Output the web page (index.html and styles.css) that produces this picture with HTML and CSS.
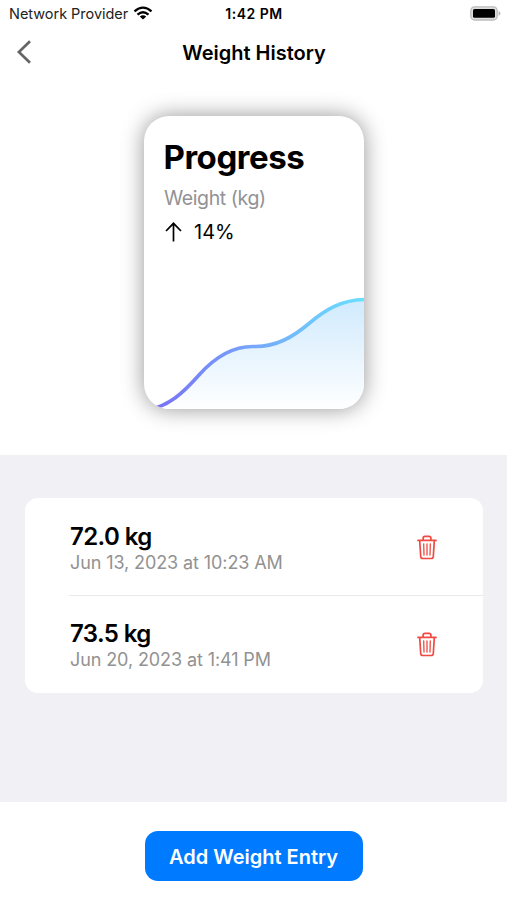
FILE: index.html
```html
<!DOCTYPE html>
<html lang="en">
<head>
<meta charset="utf-8">
<title>Weight History</title>
<link rel="stylesheet" href="styles.css">
</head>
<body>
<header class="status">
  <div class="carrier"><span class="carrier-name">Network Provider</span>
    <svg class="wifi" width="20" height="14" viewBox="0 0 20 14"><g fill="none" stroke="#000" stroke-width="2.3"><path d="M1.5 5.3Q10-2.1 18.5 5.3"/><path d="M4.5 8.6Q10 3.9 15.5 8.6"/></g><path d="M6.8 10.4Q10 7.9 13.2 10.4L10 13.6Z"/></svg>
  </div>
  <span class="time">1:42 PM</span>
  <svg class="battery" width="31" height="15" viewBox="0 0 31 15"><rect x=".8" y=".8" width="26.4" height="13.2" rx="3.8" fill="#ddd" stroke="#bdbdbd" stroke-width="1.3"/><rect x="3" y="3" width="22" height="8.8" rx="1.6"/><path d="M28.6 5Q30.4 5.6 30.4 7.4T28.6 9.8Z" fill="#b5b5b5"/></svg>
</header>
<nav class="nav">
  <svg class="back" width="16" height="26" viewBox="0 0 16 26"><path d="M14 2.2 2.9 13 14 23.8" fill="none" stroke="#656565" stroke-width="2.7"/></svg>
  <h1 class="title">Weight History</h1>
</nav>
<section class="summary">
  <article class="card">
    <h2 class="card-title">Progress</h2>
    <p class="metric">Weight (kg)</p>
    <p class="change"><svg width="18" height="20" viewBox="0 0 18 20"><path d="M9.500 19.500V1.500M2 9 9.500 1.300 17 9" fill="none" stroke="#000" stroke-width="1.700"/></svg><span>14%</span></p>
    <svg class="chart" width="220" height="120" viewBox="0 0 220 120">
      <defs>
        <linearGradient id="line" gradientUnits="userSpaceOnUse" x1="10" y1="0" x2="220" y2="0"><stop stop-color="#7870f5"/><stop offset=".5" stop-color="#76aafa"/><stop offset="1" stop-color="#69e0ff"/></linearGradient>
        <linearGradient id="area" x1="0" y1="0" x2="0" y2="1"><stop stop-color="#d0eafd"/><stop offset="1" stop-color="#fff"/></linearGradient>
      </defs>
      <path d="M4 121C25 117 39 104 55 86S88 57 110 57.500S149 48 165 34.500S198 10.500 221 10.500V120Z" fill="url(#area)"/>
      <path d="M4 121C25 117 39 104 55 86S88 57 110 57.500S149 48 165 34.500S198 10.500 221 10.500" fill="none" stroke="url(#line)" stroke-width="3.600"/>
    </svg>
  </article>
</section>
<main class="history">
  <ul class="entries">
    <li class="entry"><div class="info"><strong class="value">72.0 kg</strong><span class="date">Jun 13, 2023 at 10:23 AM</span></div>
      <svg class="trash" width="20" height="25" viewBox="0 0 20 25"><g fill="none" stroke="#f04a43" stroke-linecap="round" stroke-linejoin="round"><path stroke-width="1.700" d="M1 5.400H19M2.700 5.800 3.700 21.400Q3.900 23.500 5.800 23.500H14.200Q16.100 23.500 16.300 21.400L17.300 5.800M6.100 5V3.200Q6.100 1.300 8 1.300H12Q13.900 1.300 13.900 3.200V5"/><path stroke-width="1.300" d="M6.700 8.800 7 20M10 8.800V20M13.300 8.800 13 20"/></g></svg></li>
    <li class="entry"><div class="info"><strong class="value">73.5 kg</strong><span class="date">Jun 20, 2023 at 1:41 PM</span></div>
      <svg class="trash" width="20" height="25" viewBox="0 0 20 25"><g fill="none" stroke="#f04a43" stroke-linecap="round" stroke-linejoin="round"><path stroke-width="1.700" d="M1 5.400H19M2.700 5.800 3.700 21.400Q3.900 23.500 5.800 23.500H14.200Q16.100 23.500 16.300 21.400L17.300 5.800M6.100 5V3.200Q6.100 1.300 8 1.300H12Q13.900 1.300 13.900 3.200V5"/><path stroke-width="1.300" d="M6.700 8.800 7 20M10 8.800V20M13.300 8.800 13 20"/></g></svg></li>
  </ul>
</main>
<footer class="actions"><button class="add">Add Weight Entry</button></footer>
</body>
</html>
```
FILE: styles.css
```css
* { box-sizing: border-box; margin: 0; padding: 0; }
body { width: 507px; height: 900px; overflow: hidden; display: flex; flex-direction: column; background: #fff; color: #000; font-family: Inter, "Liberation Sans", sans-serif; }
svg { display: block; flex: none; }
.status { height: 27px; display: grid; grid-template-columns: 1fr auto 1fr; align-items: center; padding: 0 6px 0 9px; font-size: 14.5px; }
.carrier { display: flex; align-items: center; gap: 5px; color: #222; white-space: nowrap; }
.carrier-name { letter-spacing: -.03px; }
.wifi { margin-top: -2px; }
.time { font-weight: 600; font-size: 14px; letter-spacing: .5px; margin-right: 2px; }
.battery { justify-self: end; margin-top: -1px; }
.nav { height: 50px; display: grid; grid-template-columns: 1fr auto 1fr; align-items: center; padding: 0 15px 0 16px; }
.title { font-size: 20px; font-weight: 600; line-height: 26px; white-space: nowrap; padding-top: 1px; }
.summary { height: 378px; padding-top: 39px; display: flex; justify-content: center; align-items: flex-start; }
.card { width: 220px; height: 293px; margin-left: 1px; border-radius: 25px; background: #fff; box-shadow: 0 0 22px rgba(0, 0, 0, .42); padding: 21px 0 0 20px; overflow: hidden; display: flex; flex-direction: column; }
.card-title { font-size: 33px; line-height: 40px; font-weight: 700; letter-spacing: -.45px; margin-left: -.5px; }
.metric { font-size: 19.5px; line-height: 24px; margin-top: 9px; color: #929295; letter-spacing: -.4px; }
.change { display: flex; align-items: center; gap: 12px; margin-top: 10px; font-size: 20px; line-height: 24px; }
.chart { margin: auto 0 0 -20px; }
.history { height: 347px; padding: 43px 24px 0 25px; background: #f1f0f5; }
.entries { list-style: none; height: 195px; background: #fff; border-radius: 13px; padding-left: 44px; }
.entry { height: 97.5px; display: flex; align-items: center; justify-content: space-between; padding-right: 46px; }
.entry + .entry { height: 97px; margin-top: -.5px; border-top: 1px solid #e9e9ec; }
.info { display: flex; flex-direction: column; white-space: nowrap; padding: 3px 0 0 1px; }
.value { font-size: 24px; line-height: 28px; font-weight: 600; letter-spacing: -.6px; }
.date { font-size: 18px; line-height: 23px; color: #929292; letter-spacing: -.1px; }
.trash { margin-top: 1px; }
.actions { height: 98px; padding-top: 29px; display: flex; justify-content: center; align-items: flex-start; }
.add { width: 218px; height: 50px; border: 0; border-radius: 13px; background: #007aff; color: #fff; font: 600 20px Inter, "Liberation Sans", sans-serif; white-space: nowrap; padding-top: 1px; }
```
